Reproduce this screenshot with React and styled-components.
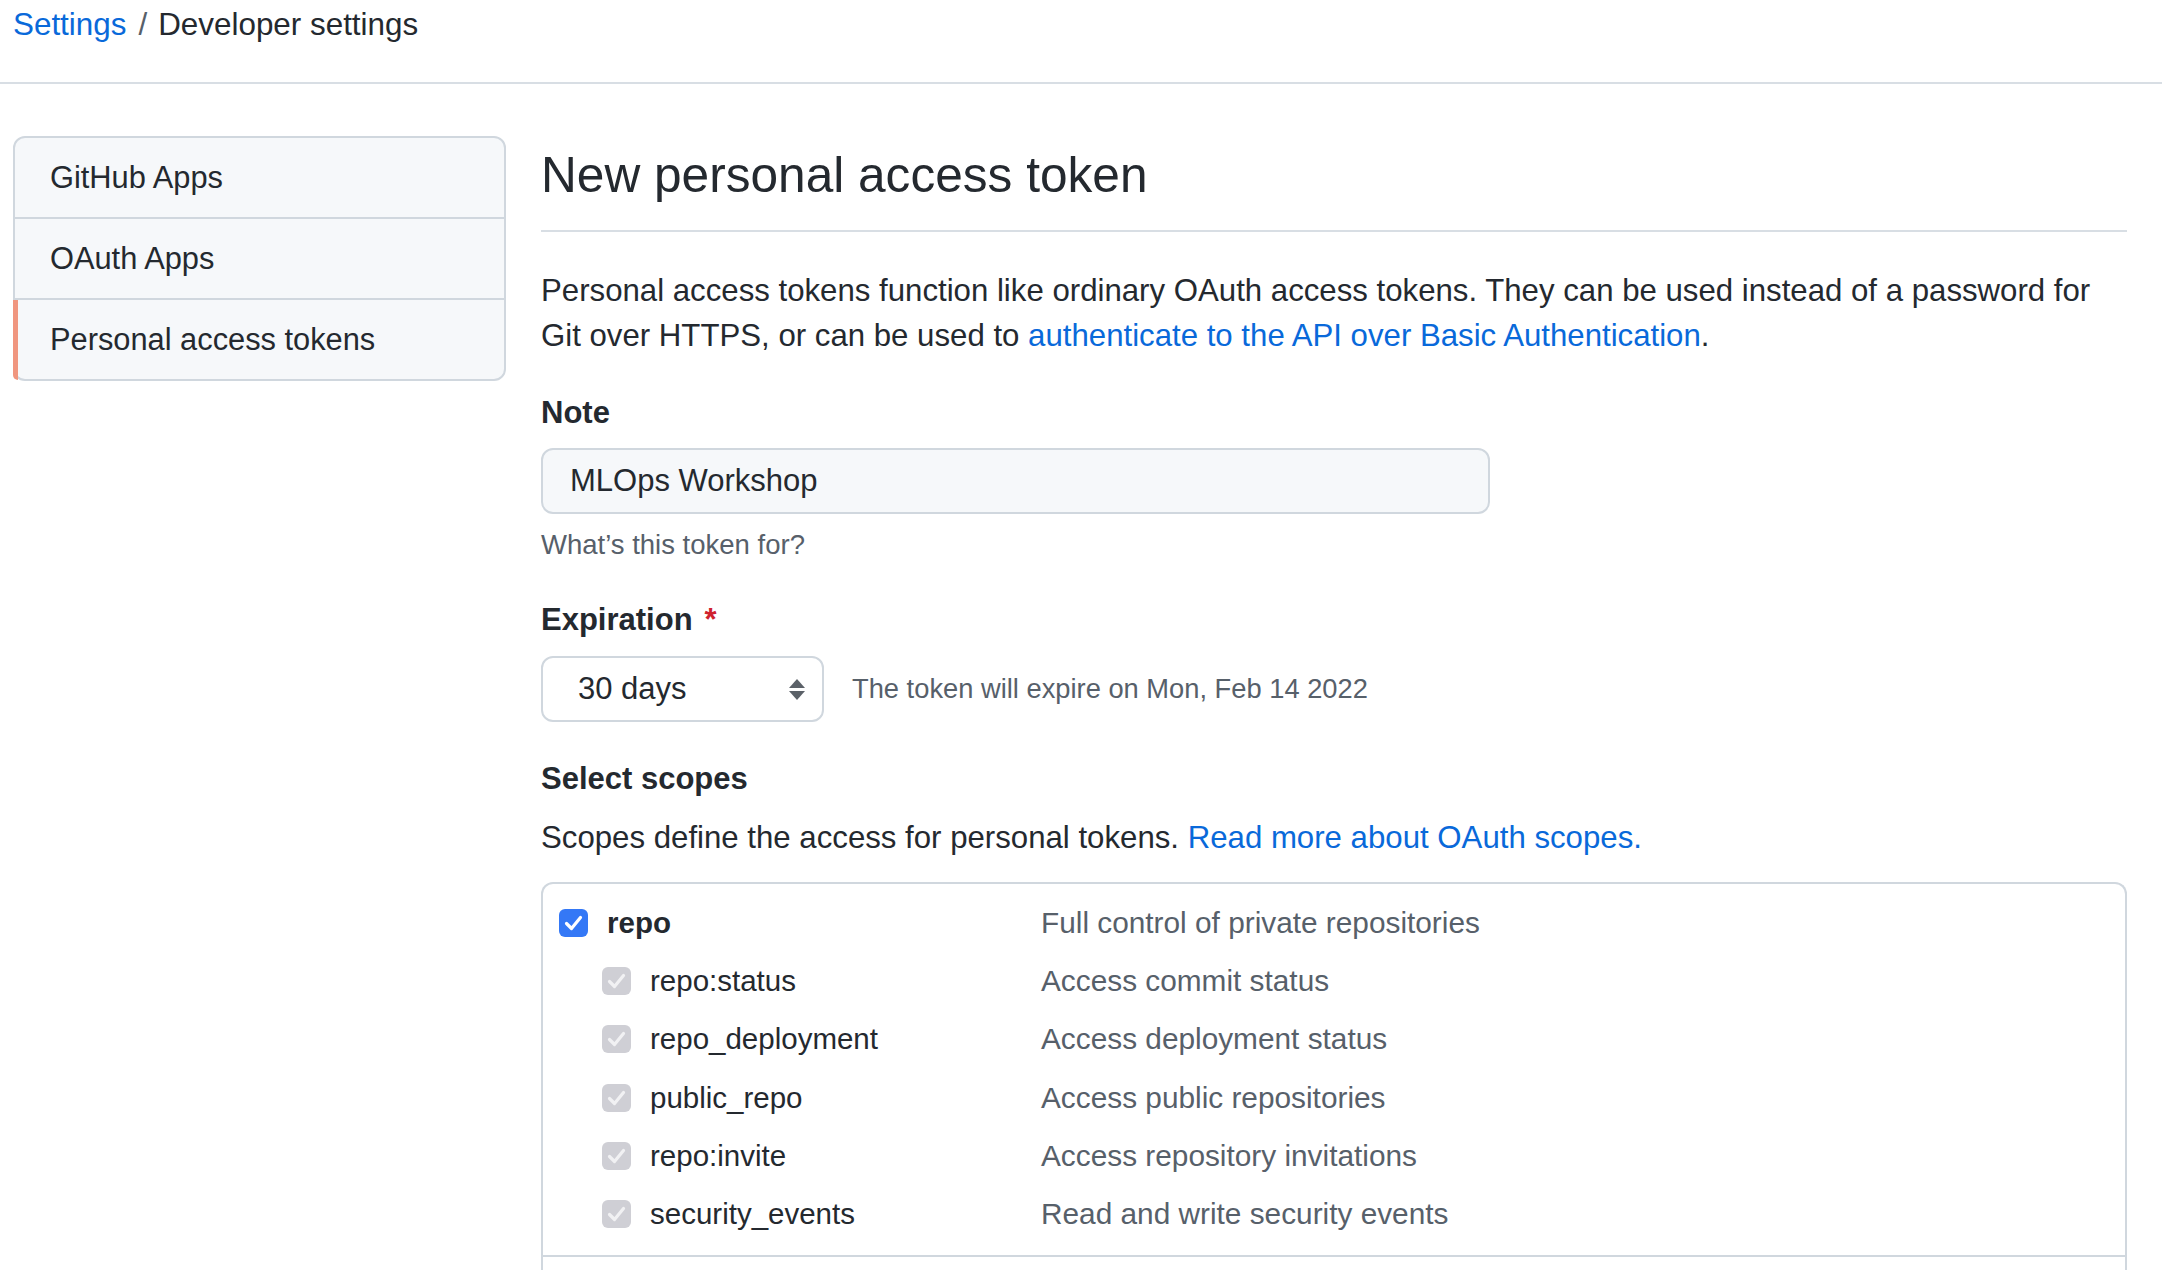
import React from "react";
import styled, { createGlobalStyle, css } from "styled-components";

const GlobalStyle = createGlobalStyle`
  * {
    box-sizing: border-box;
  }
  body {
    margin: 0;
    background: #ffffff;
    color: #24292f;
    font-family: "Liberation Sans", Arial, sans-serif;
  }
`;

const Header = styled.header`
  height: 84px;
  padding: 2px 0 0 13px;
  border-bottom: 2px solid #d8dee4;
  font-size: 31.4px;
  line-height: 46px;
`;

const Crumb = styled.a`
  color: #0969da;
  text-decoration: none;
`;

const Slash = styled.span`
  color: #57606a;
  margin: 0 11px 0 12px;
`;

const Layout = styled.div`
  display: flex;
  align-items: flex-start;
  gap: 35px;
  padding: 52px 35px 0 13px;
`;

const SideNav = styled.nav`
  flex: none;
  width: 493px;
  background: #f6f8fa;
  border: 2px solid #d0d7de;
  border-radius: 12px;
`;

const NavItem = styled.a`
  position: relative;
  box-sizing: content-box;
  display: flex;
  align-items: center;
  height: 79px;
  padding-left: 35px;
  font-size: 30.8px;
  color: #24292f;
  text-decoration: none;

  & + & {
    border-top: 2px solid #d0d7de;
  }

  ${(props) =>
    props.$selected &&
    css`
      &::before {
        content: "";
        position: absolute;
        left: -2px;
        top: 0;
        bottom: -1px;
        width: 5px;
        background: #f0967f;
        border-bottom-left-radius: 12px;
      }
    `}
`;

const Main = styled.main`
  flex: 1;
  min-width: 0;
`;

const Title = styled.h2`
  margin: 0;
  padding-bottom: 16px;
  border-bottom: 2px solid #d8dee4;
  font-size: 49.6px;
  font-weight: 400;
  line-height: 78px;
`;

const Lead = styled.p`
  margin: ${(props) => props.$top || 36}px 0 0;
  font-size: 31.2px;
  line-height: 45px;
`;

const Link = styled.a`
  color: #0969da;
  text-decoration: none;
`;

const Label = styled.div`
  margin-top: ${(props) => props.$top}px;
  font-size: 31px;
  font-weight: 700;
  line-height: 45px;
`;

const Required = styled.span`
  color: #cf222e;
  margin-left: 12px;
`;

const TextInput = styled.input`
  display: block;
  width: 949px;
  height: 66px;
  margin-top: 13px;
  padding: 0 27px;
  background: #f6f8fa;
  border: 2px solid #d0d7de;
  border-radius: 12px;
  font-family: inherit;
  font-size: 31px;
  color: #24292f;
  outline: none;
`;

const Hint = styled.div`
  margin-top: 11px;
  font-size: 27.5px;
  line-height: 40px;
  color: #57606a;
`;

const SelectRow = styled.div`
  display: flex;
  align-items: center;
  gap: 28px;
  margin-top: 14px;
`;

const Select = styled.div`
  display: flex;
  align-items: center;
  justify-content: space-between;
  width: 283px;
  height: 66px;
  padding: 0 17px 0 35px;
  background: #ffffff;
  border: 2px solid #d0d7de;
  border-radius: 12px;
  font-size: 31px;
`;

const Note = styled.span`
  font-size: 27.3px;
  color: #57606a;
`;

const ScopeBox = styled.div`
  margin-top: 22px;
  padding-bottom: 40px;
  border: 2px solid #d0d7de;
  border-bottom: none;
  border-radius: 12px 12px 0 0;
`;

const ScopeGroup = styled.div`
  padding: 10px 0 12px;
  border-bottom: 2px solid #d0d7de;
`;

const ScopeRow = styled.div`
  display: grid;
  grid-template-columns: 482px 1fr;
  align-items: center;
  height: 58.2px;
  padding-left: 16px;
`;

const ScopeName = styled.label`
  display: flex;
  align-items: center;
  gap: 19px;
  padding-left: ${(props) => (props.$child ? 43 : 0)}px;
  font-size: 29.5px;
  font-weight: ${(props) => (props.$child ? 400 : 700)};
  color: #24292f;
`;

const ScopeDesc = styled.span`
  font-size: 29.8px;
  color: #57606a;
`;

const CheckBox = ({ disabled }) => (
  <svg width="29" height="28" viewBox="0 0 29 28">
    <rect x="0" y="0" width="29" height="28" rx="6" fill={disabled ? "#cfcfd5" : "#3478f6"} />
    <path
      d="M7.5 14.5 L12.5 19.5 L21.5 8.5"
      fill="none"
      stroke={disabled ? "#f1f1f3" : "#ffffff"}
      strokeWidth="3.2"
      strokeLinecap="round"
      strokeLinejoin="round"
    />
  </svg>
);

const SelectArrows = () => (
  <svg width="16" height="21" viewBox="0 0 16 21">
    <path d="M8 0 L16 9 L0 9 Z" fill="#5b6168" />
    <path d="M0 12 L16 12 L8 21 Z" fill="#5b6168" />
  </svg>
);

const repoScope = {
  name: "repo",
  description: "Full control of private repositories",
  children: [
    { name: "repo:status", description: "Access commit status" },
    { name: "repo_deployment", description: "Access deployment status" },
    { name: "public_repo", description: "Access public repositories" },
    { name: "repo:invite", description: "Access repository invitations" },
    { name: "security_events", description: "Read and write security events" },
  ],
};

const navItems = ["GitHub Apps", "OAuth Apps", "Personal access tokens"];

const App = () => {
  return (
    <>
      <GlobalStyle />
      <Header>
        <Crumb href="#">Settings</Crumb>
        <Slash>/</Slash>
        Developer settings
      </Header>
      <Layout>
        <SideNav>
          {navItems.map((item) => (
            <NavItem key={item} href="#" $selected={item === "Personal access tokens"}>
              {item}
            </NavItem>
          ))}
        </SideNav>
        <Main>
          <Title>New personal access token</Title>
          <Lead>
            Personal access tokens function like ordinary OAuth access tokens. They can be used instead of a password
            for Git over HTTPS, or can be used to{" "}
            <Link href="#">authenticate to the API over Basic Authentication</Link>.
          </Lead>

          <Label $top={32}>Note</Label>
          <TextInput defaultValue="MLOps Workshop" />
          <Hint>What’s this token for?</Hint>

          <Label $top={32}>
            Expiration<Required>*</Required>
          </Label>
          <SelectRow>
            <Select>
              <span>30 days</span>
              <SelectArrows />
            </Select>
            <Note>The token will expire on Mon, Feb 14 2022</Note>
          </SelectRow>

          <Label $top={34}>Select scopes</Label>
          <Lead $top={14}>
            Scopes define the access for personal tokens.{" "}
            <Link href="#">Read more about OAuth scopes.</Link>
          </Lead>

          <ScopeBox>
            <ScopeGroup>
              <ScopeRow>
                <ScopeName>
                  <CheckBox disabled={false} />
                  {repoScope.name}
                </ScopeName>
                <ScopeDesc>{repoScope.description}</ScopeDesc>
              </ScopeRow>
              {repoScope.children.map((child) => (
                <ScopeRow key={child.name}>
                  <ScopeName $child>
                    <CheckBox disabled />
                    {child.name}
                  </ScopeName>
                  <ScopeDesc>{child.description}</ScopeDesc>
                </ScopeRow>
              ))}
            </ScopeGroup>
          </ScopeBox>
        </Main>
      </Layout>
    </>
  );
};

export default App;
